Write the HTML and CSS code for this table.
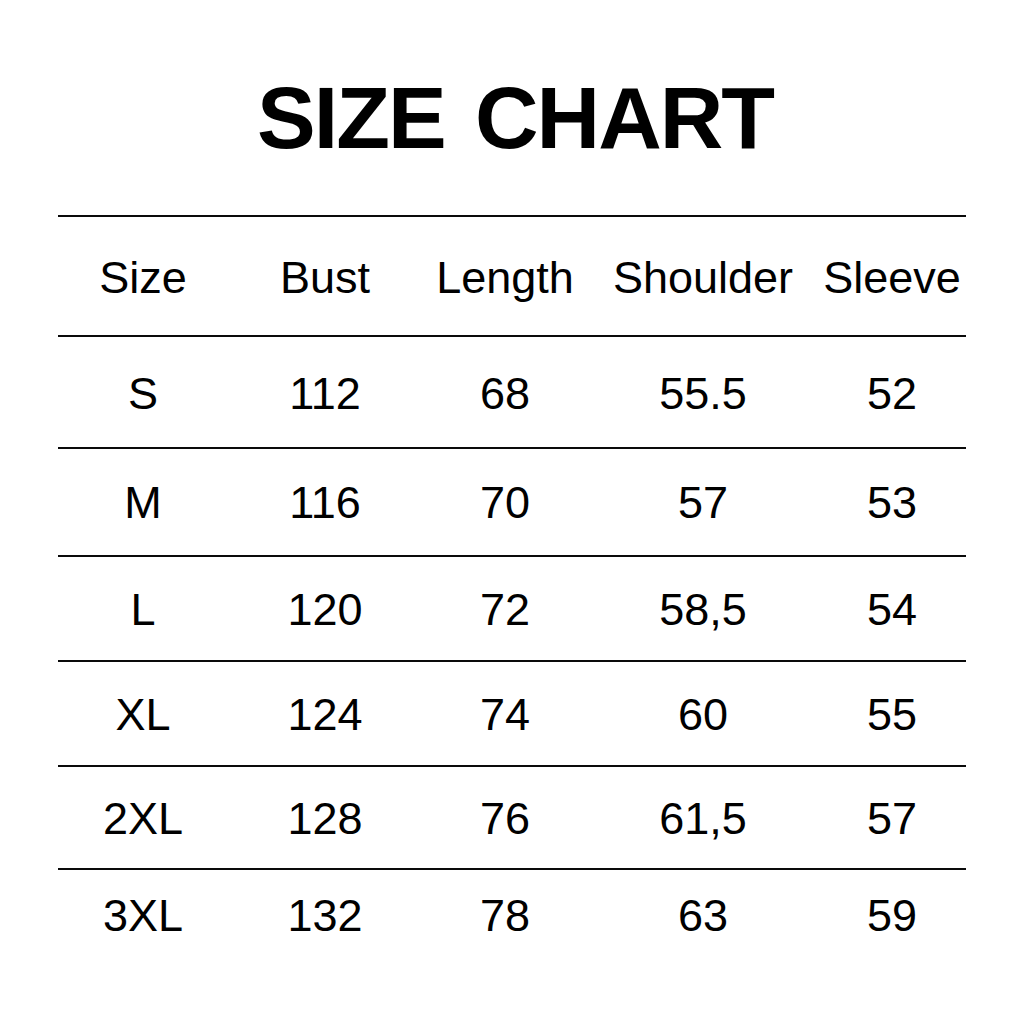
FILE: index.html
```html
<!DOCTYPE html>
<html lang="en">
<head>
<meta charset="utf-8">
<title>Size Chart</title>
<link rel="stylesheet" href="styles.css">
</head>
<body>
<main class="page">
  <h1 class="title">SIZE CHART</h1>
  <div class="table">
    <div class="row row-head">
      <div class="cell">Size</div><div class="cell">Bust</div><div class="cell">Length</div><div class="cell">Shoulder</div><div class="cell">Sleeve</div>
    </div>
    <div class="row row-s">
      <div class="cell">S</div><div class="cell">112</div><div class="cell">68</div><div class="cell">55.5</div><div class="cell">52</div>
    </div>
    <div class="row row-m">
      <div class="cell">M</div><div class="cell">116</div><div class="cell">70</div><div class="cell">57</div><div class="cell">53</div>
    </div>
    <div class="row row-l">
      <div class="cell">L</div><div class="cell">120</div><div class="cell">72</div><div class="cell">58,5</div><div class="cell">54</div>
    </div>
    <div class="row row-xl">
      <div class="cell">XL</div><div class="cell">124</div><div class="cell">74</div><div class="cell">60</div><div class="cell">55</div>
    </div>
    <div class="row row-2xl">
      <div class="cell">2XL</div><div class="cell">128</div><div class="cell">76</div><div class="cell">61,5</div><div class="cell">57</div>
    </div>
    <div class="row row-3xl">
      <div class="cell">3XL</div><div class="cell">132</div><div class="cell">78</div><div class="cell">63</div><div class="cell">59</div>
    </div>
  </div>
</main>
</body>
</html>
```
FILE: styles.css
```css
html, body {
  margin: 0;
  padding: 0;
  background: #ffffff;
}
body {
  width: 1024px;
  height: 1024px;
  overflow: hidden;
  font-family: "Liberation Sans", Arial, Helvetica, sans-serif;
  color: #000;
}
.page {
  display: flex;
  flex-direction: column;
  align-items: center;
  padding-top: 74px;
}
.title {
  margin: 0 0 53px 0;
  font-size: 88px;
  line-height: 88px;
  font-weight: 700;
  letter-spacing: -2px;
  word-spacing: 8px;
  text-align: center;
  transform: translateX(3px);
}
.table {
  width: 908px;
  display: flex;
  flex-direction: column;
}
.row {
  display: grid;
  grid-template-columns: 170px 194px 166px 230px 148px;
  align-items: center;
  border-top: 2px solid #0a0a0a;
  box-sizing: border-box;
  font-size: 45px;
}
.cell {
  text-align: center;
  white-space: nowrap;
}
.row-head { height: 120px; padding-top: 4px; }
.row-s { height: 112px; padding-top: 4px; }
.row-m { height: 108px; padding-top: 2px; }
.row-l { height: 105px; padding-top: 2px; }
.row-xl { height: 105px; padding-top: 2px; }
.row-2xl { height: 103px; padding-top: 2px; }
.row-3xl { height: 94px; }
```
